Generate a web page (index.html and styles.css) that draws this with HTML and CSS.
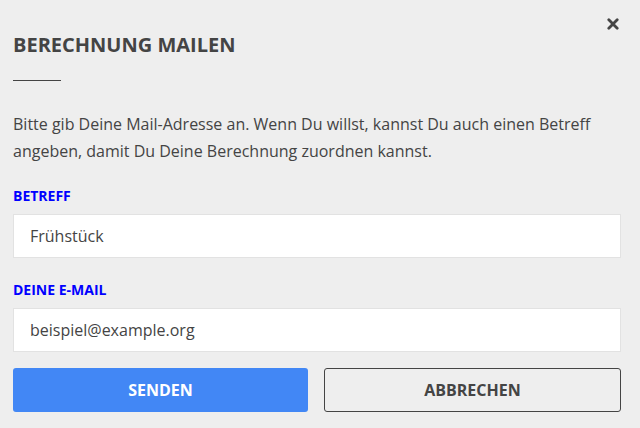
FILE: index.html
```html
<!DOCTYPE html>
<html lang="de">
<head>
<meta charset="utf-8">
<link rel="stylesheet" href="styles.css">
</head>
<body>
<div class="dialog">
  <button class="close" aria-label="Schließen">
    <svg width="12" height="12" viewBox="0 0 12 12"><path d="M1.8 1.8 L10.2 10.2 M10.2 1.8 L1.8 10.2" stroke="#444" stroke-width="2.8" stroke-linecap="round"/></svg>
  </button>
  <h2 class="title">BERECHNUNG MAILEN</h2>
  <div class="rule"></div>
  <p class="intro">Bitte gib Deine Mail-Adresse an. Wenn Du willst, kannst Du auch einen Betreff angeben, damit Du Deine Berechnung zuordnen kannst.</p>
  <label class="label">BETREFF</label>
  <div class="input">Frühstück</div>
  <label class="label">DEINE E-MAIL</label>
  <div class="input">beispiel@example.org</div>
  <div class="actions">
    <button class="btn primary">SENDEN</button>
    <button class="btn secondary">ABBRECHEN</button>
  </div>
</div>
</body>
</html>
```
FILE: styles.css
```css
html, body {
  margin: 0;
  padding: 0;
  background: #eeeeee;
}
body {
  font-family: "Open Sans", "Noto Sans", sans-serif;
  color: #444444;
}
.dialog {
  position: relative;
  padding: 30px 19px 0 13px;
}
.close {
  position: absolute;
  top: 18px;
  right: 21px;
  border: 0;
  background: none;
  padding: 0;
  width: 12px;
  height: 12px;
}
.close svg { display: block; }
.title {
  margin: 0;
  font-size: 20px;
  font-weight: 700;
  line-height: 30px;
}
.rule {
  width: 48px;
  height: 1px;
  background: #444444;
  margin-top: 20px;
}
.intro {
  margin: 30px 0 0;
  font-size: 16px;
  line-height: 27px;
}
.label {
  display: block;
  margin-top: 22px;
  font-size: 14px;
  font-weight: 700;
  color: #0000ff;
  line-height: 18px;
}
.input {
  margin-top: 9px;
  height: 42px;
  background: #ffffff;
  border: 1px solid #e2e2e2;
  padding: 0 16px;
  font-size: 16px;
  line-height: 42px;
  color: #444444;
}
.input + .label { margin-top: 23px; }
.actions {
  display: flex;
  gap: 16px;
  margin-top: 16px;
}
.btn {
  flex: 1;
  height: 44px;
  border-radius: 3px;
  font-family: "Open Sans", "Noto Sans", sans-serif;
  font-size: 16px;
  font-weight: 700;
}
.primary {
  background: #4287f5;
  border: 0;
  color: #ffffff;
}
.secondary {
  background: transparent;
  border: 1px solid #444444;
  color: #444444;
}
```
